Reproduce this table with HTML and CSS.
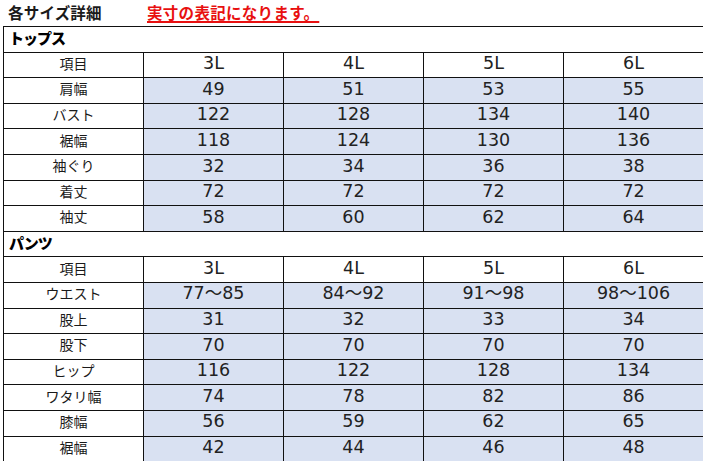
FILE: index.html
```html
<!DOCTYPE html>
<html lang="ja">
<head>
<meta charset="utf-8">
<link rel="stylesheet" href="styles.css">
</head>
<body>
<div class="heading">
  <span class="title">各サイズ詳細</span>
  <span class="note">実寸の表記になります。</span>
</div>
<table class="sizes">
  <colgroup><col><col><col><col><col></colgroup>
  <tbody>
    <tr class="section"><td colspan="5">トップス</td></tr>
    <tr class="head"><td class="label">項目</td><td>3L</td><td>4L</td><td>5L</td><td>6L</td></tr>
    <tr><td class="label">肩幅</td><td>49</td><td>51</td><td>53</td><td>55</td></tr>
    <tr><td class="label">バスト</td><td>122</td><td>128</td><td>134</td><td>140</td></tr>
    <tr><td class="label">裾幅</td><td>118</td><td>124</td><td>130</td><td>136</td></tr>
    <tr><td class="label">袖ぐり</td><td>32</td><td>34</td><td>36</td><td>38</td></tr>
    <tr><td class="label">着丈</td><td>72</td><td>72</td><td>72</td><td>72</td></tr>
    <tr><td class="label">袖丈</td><td>58</td><td>60</td><td>62</td><td>64</td></tr>
    <tr class="section"><td colspan="5">パンツ</td></tr>
    <tr class="head"><td class="label">項目</td><td>3L</td><td>4L</td><td>5L</td><td>6L</td></tr>
    <tr><td class="label">ウエスト</td><td>77～85</td><td>84～92</td><td>91～98</td><td>98～106</td></tr>
    <tr><td class="label">股上</td><td>31</td><td>32</td><td>33</td><td>34</td></tr>
    <tr><td class="label">股下</td><td>70</td><td>70</td><td>70</td><td>70</td></tr>
    <tr><td class="label">ヒップ</td><td>116</td><td>122</td><td>128</td><td>134</td></tr>
    <tr><td class="label">ワタリ幅</td><td>74</td><td>78</td><td>82</td><td>86</td></tr>
    <tr><td class="label">膝幅</td><td>56</td><td>59</td><td>62</td><td>65</td></tr>
    <tr><td class="label">裾幅</td><td>42</td><td>44</td><td>46</td><td>48</td></tr>
  </tbody>
</table>
</body>
</html>
```
FILE: styles.css
```css
html, body {
  margin: 0;
  padding: 0;
  background: #ffffff;
  overflow: hidden;
}
body {
  width: 703px;
  height: 461px;
  font-family: "DejaVu Sans", "Noto Sans CJK JP", sans-serif;
  color: #1a1a1a;
}
.heading {
  height: 26px;
  display: flex;
  align-items: center;
  padding-left: 8px;
  box-sizing: border-box;
  padding-bottom: 3px;
}
.title {
  font-family: "Noto Sans CJK JP", sans-serif;
  font-weight: bold;
  font-size: 15.5px;
  letter-spacing: 0.2px;
  width: 139px;
}
.note {
  font-family: "Noto Sans CJK JP", sans-serif;
  font-weight: bold;
  font-size: 15.5px;
  color: #e81010;
  letter-spacing: 0.3px;
  text-decoration: underline;
  text-decoration-thickness: 1.5px;
  text-underline-offset: 2px;
}
.sizes {
  margin-left: 3px;
  border-collapse: collapse;
  table-layout: fixed;
  width: 701px;
}
.sizes col {
  width: 140px;
}
.sizes td {
  border: 1px solid #111;
  height: 22.6px;
  padding: 0 0 2px 0;
  text-align: center;
  vertical-align: middle;
  font-size: 17.5px;
  line-height: 1;
  background: #d9e1f2;
  color: #222;
}
.sizes td.label {
  background: #ffffff;
  font-family: "Noto Sans CJK JP", sans-serif;
  font-size: 14px;
  height: 20.6px;
  padding-bottom: 4px;
  color: #1a1a1a;
}
.sizes tr.head td {
  background: #ffffff;
}
.sizes tr.section td {
  background: #ffffff;
  text-align: left;
  height: 21.6px;
  padding: 0 0 3px 5px;
  font-family: "Noto Sans CJK JP", sans-serif;
  font-weight: 900;
  font-size: 15px;
  letter-spacing: -1px;
  color: #000;
}
```
